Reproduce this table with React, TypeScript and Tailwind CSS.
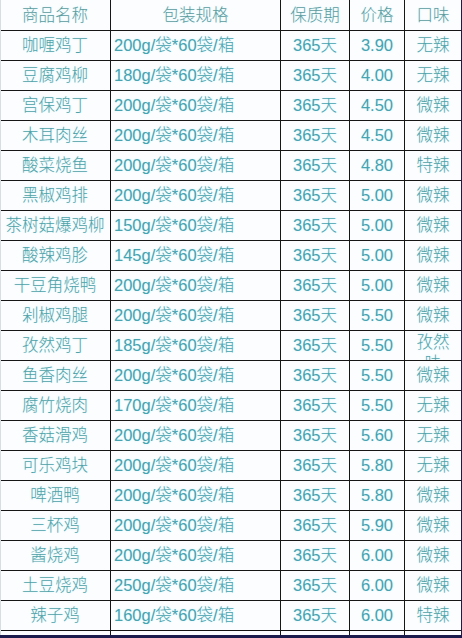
const rows: [string, string, string, string][] = [
  ["咖喱鸡丁", "200g", "3.90", "无辣"],
  ["豆腐鸡柳", "180g", "4.00", "无辣"],
  ["宫保鸡丁", "200g", "4.50", "微辣"],
  ["木耳肉丝", "200g", "4.50", "微辣"],
  ["酸菜烧鱼", "200g", "4.80", "特辣"],
  ["黑椒鸡排", "200g", "5.00", "微辣"],
  ["茶树菇爆鸡柳", "150g", "5.00", "微辣"],
  ["酸辣鸡胗", "145g", "5.00", "微辣"],
  ["干豆角烧鸭", "200g", "5.00", "微辣"],
  ["剁椒鸡腿", "200g", "5.50", "微辣"],
  ["孜然鸡丁", "185g", "5.50", "孜然味"],
  ["鱼香肉丝", "200g", "5.50", "微辣"],
  ["腐竹烧肉", "170g", "5.50", "无辣"],
  ["香菇滑鸡", "200g", "5.60", "无辣"],
  ["可乐鸡块", "200g", "5.80", "无辣"],
  ["啤酒鸭", "200g", "5.80", "微辣"],
  ["三杯鸡", "200g", "5.90", "微辣"],
  ["酱烧鸡", "200g", "6.00", "微辣"],
  ["土豆烧鸡", "250g", "6.00", "微辣"],
  ["辣子鸡", "160g", "6.00", "特辣"],
];

const grid = "grid grid-cols-[110px_170px_69px_55px_57px]";
const cell = "flex items-center justify-center border-r border-b border-[#161616] overflow-hidden whitespace-nowrap";

export default function App() {
  return (
    <div
      className="w-[462px] h-[638px] bg-[#1b1b4e] overflow-hidden"
      style={{ fontFamily: '"Liberation Sans", "Noto Sans CJK SC", sans-serif' }}
    >
      <div className="w-[461px] h-[635px] bg-[#fbfdff] overflow-hidden border-l border-[#d8dde4] text-[16.5px] font-light text-[#46a3b0] [text-shadow:0_0_2px_#d4f4f8]">
        <div className={`${grid} h-[31px] text-[#5b9c9f]`}>
          <div className={`${cell} -ml-px`}>商品名称</div>
          <div className={cell}>包装规格</div>
          <div className={cell}>保质期</div>
          <div className={cell}>价格</div>
          <div className={cell}>口味</div>
        </div>
        {rows.map(([name, weight, price, taste]) => (
          <div key={name} className={`${grid} h-[30px]`}>
            <div className={`${cell} -ml-px text-[#4fa2a8]`}>{name}</div>
            <div className={`${cell} justify-start pl-[3px]`}>{weight}/袋*60袋/箱</div>
            <div className={cell}>365天</div>
            <div className={cell}>{price}</div>
            {taste === "孜然味" ? (
              <div className={`${cell} items-start leading-[21px] whitespace-normal text-[#4fa2a8] pt-px`}>
                <span className="block h-[28px] overflow-hidden text-center">
                  孜然
                  <br />味
                </span>
              </div>
            ) : (
              <div className={`${cell} text-[#4fa2a8]`}>{taste}</div>
            )}
          </div>
        ))}
        <div className={`${grid} h-[10px]`}>
          <div className={`${cell} -ml-px`} />
          <div className={cell} />
          <div className={cell} />
          <div className={cell} />
          <div className={cell} />
        </div>
      </div>
    </div>
  );
}
